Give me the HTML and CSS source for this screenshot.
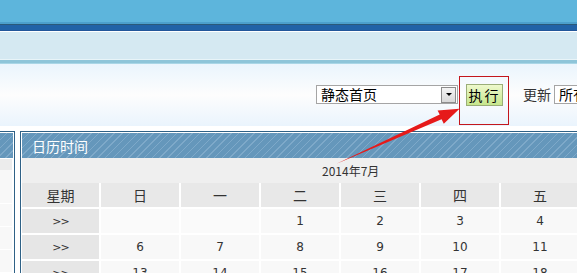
FILE: index.html
```html
<!DOCTYPE html>
<html lang="zh-CN">
<head>
  <meta charset="UTF-8">
  <title>日历时间</title>
  <link rel="stylesheet" href="styles.css">
</head>
<body>
  <div class="page">
    <div class="top-bar"></div>
    <div class="nav-bar"></div>
    <div class="sub-bar"></div>
    <div class="sub-line"></div>

    <div class="toolbar">
      <div class="select wide">
        <span class="select-text">静态首页</span>
        <span class="select-btn"><span class="caret"></span></span>
      </div>
      <div class="mark-box">
        <button class="run-btn">执行</button>
      </div>
      <span class="label">更新</span>
      <div class="select narrow">
        <span class="select-text">所有</span>
      </div>
    </div>

    <div class="panels">
      <div class="panel side">
        <div class="panel-head"></div>
        <div class="side-body">
          <div class="side-gap"></div>
          <div class="side-grey"></div>
          <div class="side-row tall"></div>
          <div class="side-row"></div>
          <div class="side-row"></div>
          <div class="side-row"></div>
        </div>
      </div>

      <div class="panel main">
        <div class="panel-head"><span class="panel-title">日历时间</span></div>
        <div class="month">2014年7月</div>
        <div class="calendar">
          <div class="cell head first">星期</div>
          <div class="cell head">日</div>
          <div class="cell head">一</div>
          <div class="cell head">二</div>
          <div class="cell head">三</div>
          <div class="cell head">四</div>
          <div class="cell head">五</div>
          <div class="cell head">六</div>

          <div class="cell first week">&gt;&gt;</div>
          <div class="cell day empty"></div>
          <div class="cell day empty"></div>
          <div class="cell day">1</div>
          <div class="cell day">2</div>
          <div class="cell day">3</div>
          <div class="cell day">4</div>
          <div class="cell day">5</div>

          <div class="cell first week">&gt;&gt;</div>
          <div class="cell day">6</div>
          <div class="cell day">7</div>
          <div class="cell day">8</div>
          <div class="cell day">9</div>
          <div class="cell day">10</div>
          <div class="cell day">11</div>
          <div class="cell day">12</div>

          <div class="cell first week">&gt;&gt;</div>
          <div class="cell day">13</div>
          <div class="cell day">14</div>
          <div class="cell day">15</div>
          <div class="cell day">16</div>
          <div class="cell day">17</div>
          <div class="cell day">18</div>
          <div class="cell day">19</div>
        </div>
      </div>
    </div>

    <!-- red pointer arrow drawn over the page -->
    <svg class="arrow" width="577" height="273" viewBox="0 0 577 273">
      <polygon points="336,164 439.7,114.6 437.6,110.4 459.5,108.8 443.8,123.8 441.6,119.2" fill="#e61a1a"/>
    </svg>
  </div>
</body>
</html>
```

FILE: styles.css
```css
html, body {
  margin: 0;
  padding: 0;
  overflow: hidden;
  background: #ffffff;
}
body {
  font-family: "Noto Sans CJK SC", "DejaVu Sans", sans-serif;
  font-size: 12px;
  color: #333;
}
.page {
  position: relative;
  width: 700px;
}

/* header bands */
.top-bar {
  height: 22px;
  background: #5db5dc;
}
.nav-bar {
  height: 10px;
  background: linear-gradient(#4ca0cc 0, #4ca0cc 2px, #2a5a7a 2px, #2a5a7a 3px,
    #2163a7 3px, #2163a7 8px, #22569a 8px, #22569a 9px, #ffffff 9px);
}
.sub-bar {
  height: 27px;
  background: #d5e9f2;
  border-bottom: 1px solid #e8f4f8;
}
.sub-line {
  height: 3px;
  background: #8ec5d9;
  border-bottom: 1px solid #a9d6e6;
}

/* toolbar */
.toolbar {
  height: 62px;
  display: flex;
  align-items: flex-start;
  padding-left: 316px;
  background: linear-gradient(#eaf5fd, #fdfdfd 50%, #eaf4fd);
  margin-bottom: 5px;
}
.select {
  margin-top: 21px;
  height: 17px;
  border: 1px solid #a5a5a5;
  background: #fff;
  display: flex;
  align-items: center;
  box-sizing: content-box;
}
.select.wide {
  width: 140px;
}
.select.narrow {
  width: 60px;
  margin-left: 3px;
}
.select-text {
  flex: 1;
  padding-left: 4px;
  font-size: 14px;
  line-height: 17px;
  color: #000;
}
.select-btn {
  width: 15px;
  height: 16px;
  margin-right: 1px;
  background: linear-gradient(#f4f4f4, #d8d8d8);
  border: 1px solid #8c8c8c;
  box-sizing: border-box;
  display: flex;
  align-items: center;
  justify-content: center;
}
.caret {
  width: 0;
  height: 0;
  border-left: 3px solid transparent;
  border-right: 3px solid transparent;
  border-top: 3px solid #000;
}
.mark-box {
  margin-top: 12px;
  margin-left: 1px;
  width: 50px;
  height: 49px;
  border: 1px solid #c4161c;
  padding: 7px 0 0 6px;
  box-sizing: border-box;
}
.run-btn {
  width: 37px;
  height: 22px;
  padding: 0;
  border: 1px solid #9aae78;
  background: linear-gradient(#eef9cc, #c6e68c);
  font-family: "Noto Sans CJK SC", sans-serif;
  font-size: 14px;
  line-height: 18px;
  color: #000;
  letter-spacing: 2px;
}
.label {
  margin-top: 21px;
  margin-left: 14px;
  font-size: 14px;
  line-height: 19px;
  color: #333;
}

/* panels */
.panels {
  display: flex;
  align-items: flex-start;
}
.panel {
  border: 1px solid #2f6186;
  padding: 1px;
  background: #fff;
}
.panel.side {
  width: 13px;
  border-left: none;
  padding-left: 0;
  margin-right: 5px;
}
.panel.main {
  width: 650px;
  padding-right: 0;
}
.panel-head {
  height: 25px;
  background-color: #6597bb;
  background-image: repeating-linear-gradient(135deg, transparent 0, transparent 4.5px,
    #7ea9c9 4.5px, #7ea9c9 5.5px);
  display: flex;
  align-items: center;
}
.panel-title {
  padding-left: 10px;
  color: #fff;
  font-size: 14px;
}
.side-body {
  padding-right: 1px;
}
.side-gap {
  height: 1px;
}
.side-grey {
  height: 11px;
  background: #ececec;
}
.side-row {
  height: 22px;
  background: #f8f8f8;
  border-bottom: 1px solid #fff;
}
.side-row.tall {
  height: 33px;
}

/* calendar */
.month {
  height: 25px;
  line-height: 25px;
  background: #efefef;
  padding-left: 300px;
  font-size: 12px;
  color: #333;
}
.calendar {
  display: grid;
  grid-template-columns: 77px repeat(7, 78px);
  grid-auto-rows: 24px;
  gap: 2px;
  background: #fff;
}
.cell {
  display: flex;
  align-items: center;
  justify-content: center;
  font-family: "DejaVu Sans", sans-serif;
  font-size: 12px;
  color: #333;
}
.cell.head {
  background: #e8e8e8;
  font-family: "Noto Sans CJK SC", sans-serif;
  font-size: 14px;
}
.cell.first {
  background: #e6e6e6;
}
.cell.week {
  font-size: 11px;
  letter-spacing: -1px;
}
.cell.day {
  background: #f8f8f8;
}
.cell.day.empty {
  background: #fafafa;
}

.arrow {
  position: absolute;
  left: 0;
  top: 0;
  pointer-events: none;
}
```
